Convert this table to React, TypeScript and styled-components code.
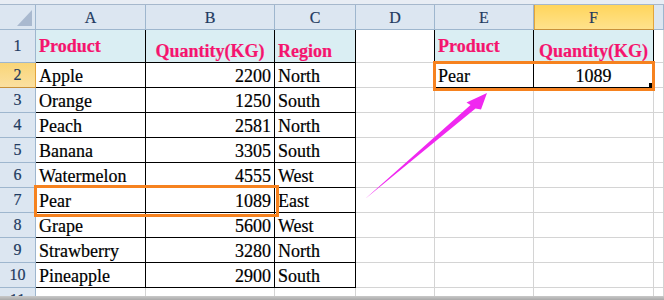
import React from 'react';
import styled, { createGlobalStyle } from 'styled-components';

type Col = 'A' | 'B' | 'C' | 'D' | 'E' | 'F' | 'G';

const COLS: Col[] = ['A', 'B', 'C', 'D', 'E', 'F', 'G'];
const ROW_COUNT = 11;

const fruits: [string, number, string][] = [
  ['Apple', 2200, 'North'],
  ['Orange', 1250, 'South'],
  ['Peach', 2581, 'North'],
  ['Banana', 3305, 'South'],
  ['Watermelon', 4555, 'West'],
  ['Pear', 1089, 'East'],
  ['Grape', 5600, 'West'],
  ['Strawberry', 3280, 'North'],
  ['Pineapple', 2900, 'South'],
];

type CellData = {
  text?: string;
  justify?: 'flex-start' | 'flex-end' | 'center';
  valign?: 'flex-end' | 'center';
  title?: boolean;
};

const buildCells = (): Record<string, CellData> => {
  const cells: Record<string, CellData> = {
    A1: { text: 'Product', title: true, valign: 'center' },
    B1: { text: 'Quantity(KG)', title: true, justify: 'center' },
    C1: { text: 'Region', title: true },
    E1: { text: 'Product', title: true, valign: 'center' },
    F1: { text: 'Quantity(KG)', title: true, justify: 'center' },
    E2: { text: 'Pear' },
    F2: { text: '1089', justify: 'center' },
  };
  fruits.forEach(([name, qty, region], i) => {
    const r = i + 2;
    cells[`A${r}`] = { text: name };
    cells[`B${r}`] = { text: String(qty), justify: 'flex-end' };
    cells[`C${r}`] = { text: region };
  });
  return cells;
};

// cells inside the two bordered tables (A1:C10 and E1:F2)
const inTable = (col: Col | undefined, row: number) => {
  if (!col) return false;
  if ('ABC'.includes(col) && row >= 1 && row <= 10) return true;
  if ('EF'.includes(col) && row >= 1 && row <= 2) return true;
  return false;
};

const SERIF = `'Liberation Serif', 'Times New Roman', serif`;

const GlobalStyle = createGlobalStyle`
  html, body {
    margin: 0;
    padding: 0;
    background: #ffffff;
    overflow: hidden;
    font-family: ${SERIF};
  }
`;

const Sheet = styled.div`
  position: relative;
  width: 664px;
  height: 300px;
  display: flex;
  flex-direction: column;
  background: #ffffff;
  overflow: hidden;
  font-family: ${SERIF};
`;

const TopStrip = styled.div`
  height: 4px;
  flex: none;
  background: #e8edf4;
  border-bottom: 1px solid #a6b8cc;
`;

const Grid = styled.div`
  flex: 1;
  min-height: 0;
  overflow: hidden;
  display: grid;
  grid-template-columns: 36px 110px 129px 81px 79px 99px 120px 10px;
  grid-template-rows: 25px 33px repeat(10, 25px);
`;

const BottomEdge = styled.div`
  height: 4px;
  flex: none;
  background: linear-gradient(#c9c9c9, #a9a9a9);
`;

const Corner = styled.div`
  position: relative;
  box-sizing: border-box;
  background: #dce6f1;
  border-right: 1px solid #9eb6ce;
  border-bottom: 1px solid #9eb6ce;

  &::after {
    content: '';
    position: absolute;
    right: 3px;
    bottom: 3px;
    width: 15px;
    height: 16px;
    background: #a9b9cf;
    clip-path: polygon(100% 0, 100% 100%, 0 100%);
  }
`;

const ColHead = styled.div<{ $active?: boolean }>`
  box-sizing: border-box;
  display: flex;
  align-items: center;
  justify-content: center;
  font-size: 16px;
  color: #1f3a60;
  -webkit-text-stroke: 0.2px #1f3a60;
  background: ${(p) => (p.$active ? 'linear-gradient(#ffd55c, #ffe28c)' : '#dce6f1')};
  border-right: 1px solid ${(p) => (p.$active ? '#e2a43c' : '#9eb6ce')};
  border-bottom: 1px solid ${(p) => (p.$active ? '#c8913a' : '#9eb6ce')};
  box-shadow: ${(p) => (p.$active ? 'inset 1px 0 0 #e2a43c' : 'none')};
  padding-top: 1px;
`;

const RowHead = styled.div<{ $active?: boolean }>`
  box-sizing: border-box;
  display: flex;
  align-items: center;
  justify-content: center;
  font-size: 16px;
  color: #1f3a60;
  -webkit-text-stroke: 0.2px #1f3a60;
  background: ${(p) => (p.$active ? 'linear-gradient(#f9d578, #fbe0a0)' : '#dce6f1')};
  border-right: 1px solid ${(p) => (p.$active ? '#e2a43c' : '#9eb6ce')};
  border-bottom: 1px solid ${(p) => (p.$active ? '#c8913a' : '#9eb6ce')};
`;

const Cell = styled.div<{
  $right: string;
  $bottom: string;
  $fill: string;
  $justify: string;
  $valign: string;
  $title?: boolean;
}>`
  position: relative;
  box-sizing: border-box;
  display: flex;
  justify-content: ${(p) => p.$justify};
  align-items: ${(p) => p.$valign};
  padding: 0 3px;
  background: ${(p) => p.$fill};
  border-right: 1px solid ${(p) => p.$right};
  border-bottom: 1px solid ${(p) => p.$bottom};
  font-size: 18px;
  line-height: 21px;
  white-space: nowrap;
  overflow: hidden;
  color: ${(p) => (p.$title ? '#f5146e' : '#000000')};
  font-weight: ${(p) => (p.$title ? 700 : 400)};
  -webkit-text-stroke: 0.2px ${(p) => (p.$title ? '#f5146e' : '#000000')};
`;

const FillHandle = styled.span`
  position: absolute;
  right: -1px;
  bottom: -1px;
  width: 4px;
  height: 4px;
  background: #000;
  border: 1px solid #fff;
`;

const Highlight = styled.div<{ $x: number; $y: number; $w: number; $h: number }>`
  position: absolute;
  left: ${(p) => p.$x}px;
  top: ${(p) => p.$y}px;
  width: ${(p) => p.$w}px;
  height: ${(p) => p.$h}px;
  box-sizing: border-box;
  border: 3px solid #f6821f;
  pointer-events: none;
`;

const ArrowLayer = styled.svg`
  position: absolute;
  left: 0;
  top: 0;
  pointer-events: none;
`;

const GRID_LINE = '#d4d4d4';
const TITLE_FILL = '#daeef3';

export default function App() {
  const cells = buildCells();
  const rows = Array.from({ length: ROW_COUNT }, (_, i) => i + 1);

  return (
    <Sheet>
      <GlobalStyle />
      <TopStrip />
      <Grid>
        <Corner />
        {COLS.map((c) => (
          <ColHead key={c} $active={c === 'F'}>
            {c === 'G' ? '' : c}
          </ColHead>
        ))}
        {rows.map((r) => (
          <React.Fragment key={r}>
            <RowHead $active={r === 2}>{r}</RowHead>
            {COLS.map((c, ci) => {
              const data = cells[`${c}${r}`] || {};
              const here = inTable(c, r);
              const right = here || inTable(COLS[ci + 1], r) ? '#000000' : GRID_LINE;
              const bottom = here || inTable(c, r + 1) ? '#000000' : GRID_LINE;
              const fill = r === 1 && here ? TITLE_FILL : '#ffffff';
              return (
                <Cell
                  key={c}
                  $right={right}
                  $bottom={bottom}
                  $fill={fill}
                  $justify={data.justify || 'flex-start'}
                  $valign={data.valign || 'flex-end'}
                  $title={data.title}
                >
                  {data.text}
                  {c === 'F' && r === 2 && <FillHandle />}
                </Cell>
              );
            })}
          </React.Fragment>
        ))}
      </Grid>
      <BottomEdge />

      <Highlight $x={433} $y={61} $w={222} $h={30} />
      <Highlight $x={34} $y={185} $w={245} $h={32} />

      <ArrowLayer width={664} height={300} viewBox="0 0 664 300">
        <polygon
          points="365,199 470.5,105 466.5,102.5 487,93 481,109.5 475.5,108.5"
          fill="#f028f0"
        />
      </ArrowLayer>
    </Sheet>
  );
}
